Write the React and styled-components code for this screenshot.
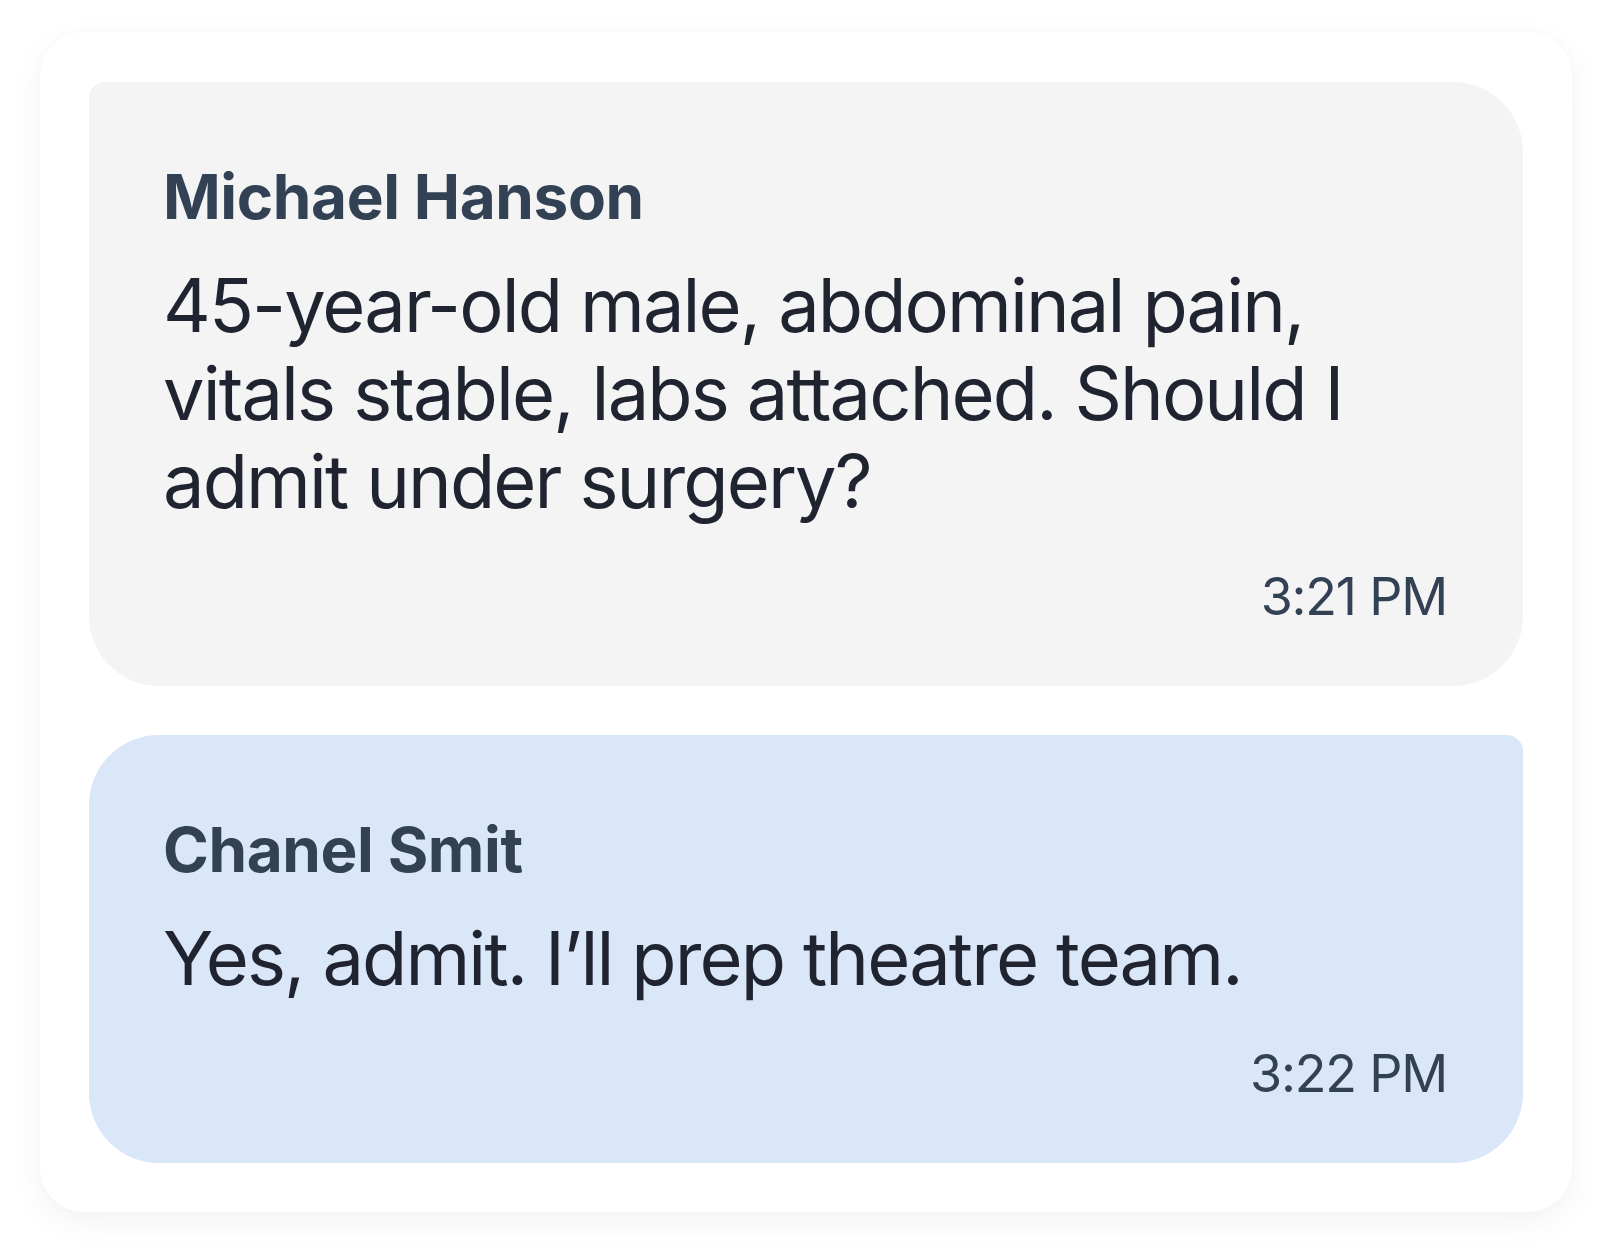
import React from "react";
import { styled, createGlobalStyle } from "styled-components";

const GlobalStyle = createGlobalStyle`
  body {
    margin: 0;
    background: #ffffff;
    font-family: Inter, "Noto Sans", sans-serif;
  }
`;

const Page = styled.div`
  padding: 32px 38px 45px 40px;
`;

const Card = styled.div`
  background: #ffffff;
  border-radius: 44px;
  box-shadow: 0 10px 32px rgba(15, 23, 42, 0.05), 0 0 10px rgba(15, 23, 42, 0.02);
  padding: 50px 49px 49px 49px;
  display: flex;
  flex-direction: column;
  gap: 49px;
`;

const Bubble = styled.div`
  background: ${(p) => (p.$mine ? "#d9e7f9" : "#f4f4f5")};
  border-radius: ${(p) => (p.$mine ? "70px 16px 70px 70px" : "16px 70px 70px 70px")};
  padding: 78px 76px 57px 74px;
  display: flex;
  flex-direction: column;
`;

const Sender = styled.div`
  font-size: 62px;
  line-height: 74px;
  font-weight: 700;
  color: #334155;
  letter-spacing: -0.4px;
`;

const Text = styled.div`
  margin-top: 27px;
  font-size: 74px;
  line-height: 88px;
  font-weight: 400;
  color: #1f2430;
  letter-spacing: -1.9px;
`;

const Time = styled.div`
  margin-top: 39px;
  align-self: flex-end;
  font-size: 52px;
  line-height: 65px;
  color: #334155;
  letter-spacing: -1.2px;
`;

const messages = [
  {
    id: 1,
    sender: "Michael Hanson",
    lines: ["45-year-old male, abdominal pain,", "vitals stable, labs attached. Should I", "admit under surgery?"],
    time: "3:21 PM",
    mine: false,
  },
  {
    id: 2,
    sender: "Chanel Smit",
    lines: ["Yes, admit. I’ll prep theatre team."],
    time: "3:22 PM",
    mine: true,
  },
];

export default function App() {
  return (
    <>
      <GlobalStyle />
      <Page>
        <Card>
          {messages.map((m) => (
            <Bubble key={m.id} $mine={m.mine}>
              <Sender>{m.sender}</Sender>
              <Text>
                {m.lines.map((l, i) => (
                  <div key={i}>{l}</div>
                ))}
              </Text>
              <Time>{m.time}</Time>
            </Bubble>
          ))}
        </Card>
      </Page>
    </>
  );
}
